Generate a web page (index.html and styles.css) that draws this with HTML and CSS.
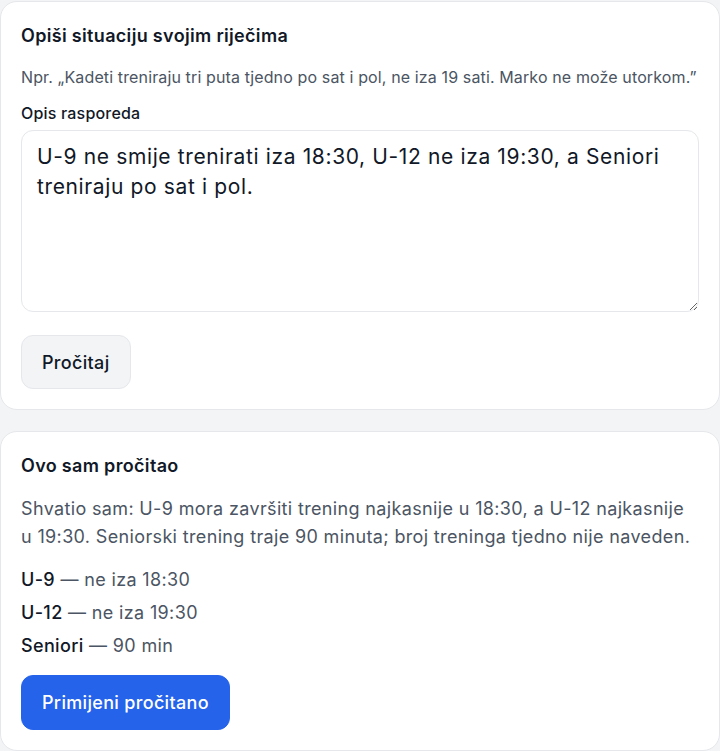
FILE: index.html
```html
<!DOCTYPE html>
<html lang="hr">
<head>
    <meta charset="UTF-8">
    <meta name="viewport" content="width=device-width, initial-scale=1.0">
    <title>Raspored treninga</title>
    <link rel="stylesheet" href="styles.css">
</head>
<body>
    <div class="page">
        <section class="card">
            <h2 class="card-title">Opiši situaciju svojim riječima</h2>
            <p class="hint">Npr. „Kadeti treniraju tri puta tjedno po sat i pol, ne iza 19 sati. Marko ne može utorkom.”</p>
            <label class="field-label" for="opis">Opis rasporeda</label>
            <textarea id="opis" class="field">U-9 ne smije trenirati iza 18:30, U-12 ne iza 19:30, a Seniori treniraju po sat i pol.</textarea>
            <div class="actions">
                <button class="btn btn-light">Pročitaj</button>
            </div>
        </section>

        <section class="card">
            <h2 class="card-title">Ovo sam pročitao</h2>
            <p class="summary">Shvatio sam: U-9 mora završiti trening najkasnije u 18:30, a U-12 najkasnije u 19:30. Seniorski trening traje 90 minuta; broj treninga tjedno nije naveden.</p>
            <ul class="rules">
                <li><b>U-9</b> — ne iza 18:30</li>
                <li><b>U-12</b> — ne iza 19:30</li>
                <li><b>Seniori</b> — 90 min</li>
            </ul>
            <div class="actions actions-tight">
                <button class="btn btn-primary">Primijeni pročitano</button>
            </div>
        </section>
    </div>
</body>
</html>
```

FILE: styles.css
```css
body {
    font-family: 'Inter', 'Noto Sans', sans-serif;
    background-color: #f3f4f6;
    margin: 0;
    color: #111827;
    letter-spacing: 0.022em;
}
.page {
    display: flex;
    flex-direction: column;
    gap: 21px;
    padding: 1px 0;
}
.card {
    background-color: #fff;
    border: 1px solid #e5e7eb;
    border-radius: 17px;
    padding: 20px;
    display: flex;
    flex-direction: column;
}
.card-title {
    font-size: 18px;
    font-weight: 600;
    line-height: 28px;
    letter-spacing: 0.018em;
    margin: 0 0 15px;
}
.hint {
    font-size: 16px;
    line-height: 24px;
    letter-spacing: 0.008em;
    color: #4b5563;
    margin: 0 0 12px;
}
.field-label {
    font-size: 16px;
    font-weight: 500;
    line-height: 24px;
    letter-spacing: 0.012em;
    margin-bottom: 5px;
}
.field {
    font-family: inherit;
    font-size: 21px;
    line-height: 30px;
    letter-spacing: 0.03em;
    color: #111827;
    height: 182px;
    box-sizing: border-box;
    padding: 11px 15px;
    border: 1px solid #e5e7eb;
    border-radius: 12px;
    resize: vertical;
    margin: 0;
}
.actions {
    display: flex;
    margin-top: 23px;
}
.actions-tight {
    margin-top: 13px;
}
.btn {
    font-family: inherit;
    font-size: 18px;
    font-weight: 500;
    letter-spacing: 0.018em;
    height: 54px;
    padding: 0 20px;
    border-radius: 12px;
    cursor: pointer;
}
.btn-light {
    background-color: #f3f4f6;
    border: 1px solid #e5e7eb;
    color: #111827;
}
.btn-primary {
    background-color: #2563eb;
    border: 1px solid #2563eb;
    color: #fff;
    height: 55px;
}
.summary {
    font-size: 18px;
    line-height: 28px;
    color: #4b5563;
    margin: 0 0 12px;
}
.rules {
    list-style-type: none;
    padding: 0;
    margin: 0;
    font-size: 18px;
    line-height: 33px;
    color: #4b5563;
}
.rules b {
    font-weight: 500;
    color: #111827;
}
```
